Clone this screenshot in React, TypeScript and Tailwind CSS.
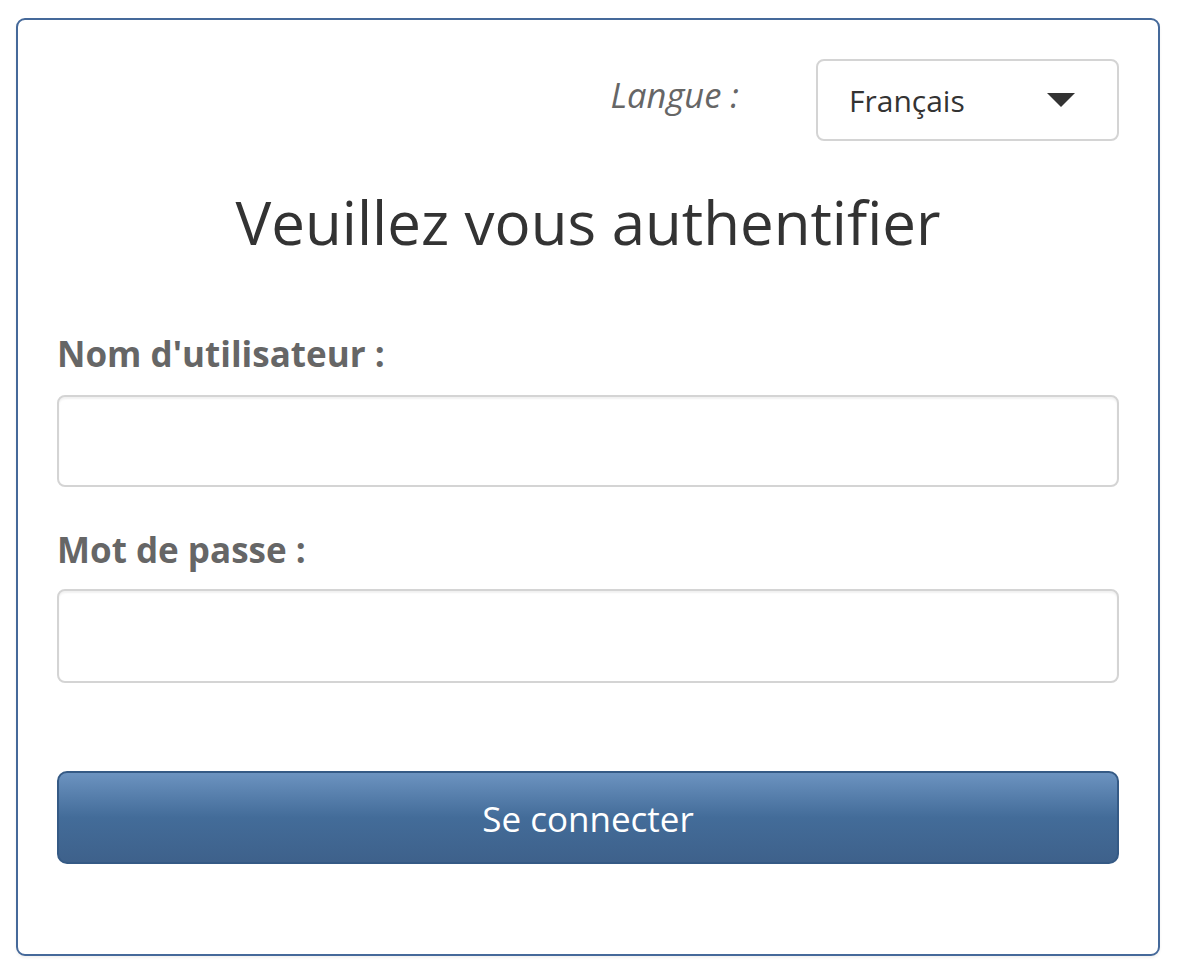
export default function App() {
  return (
    <div className="min-h-screen bg-white pt-[18px] pl-[16px]" style={{ fontFamily: '"Open Sans", sans-serif' }}>
      <div className="w-[1144px] h-[938px] rounded-[9px] border-2 border-[#45699a] bg-white px-[39px] pt-[39px] shadow-[0_2px_3px_rgba(0,0,0,0.06)]">
        {/* language */}
        <div className="flex items-start justify-end">
          <span className="mt-[16px] mr-[77px] text-[34.5px] leading-[40px] italic text-[#666]">Langue :</span>
          <div className="flex h-[82px] w-[303px] items-center justify-between rounded-[8px] border-2 border-[#d4d4d4] pl-[31px] pr-[42px]">
            <span className="text-[30px] text-[#333]">Français</span>
            <svg width="28" height="14" viewBox="0 0 28 14">
              <path d="M0 0 L28 0 L14 14 Z" fill="#333" />
            </svg>
          </div>
        </div>

        <h1 className="mt-[41px] text-center text-[60px] leading-[80px] text-[#333]">Veuillez vous authentifier</h1>

        {/* fields */}
        <label className="mt-[72px] block text-[35px] font-bold leading-[40px] text-[#666]">Nom d'utilisateur :</label>
        <input className="mt-[21px] block h-[92px] w-full rounded-[8px] border-2 border-[#d4d4d4] shadow-[inset_0_2px_2px_rgba(0,0,0,0.06)] outline-none" />

        <label className="mt-[43px] block text-[35px] font-bold leading-[40px] text-[#666]">Mot de passe :</label>
        <input type="password" className="mt-[19px] block h-[94px] w-full rounded-[8px] border-2 border-[#d4d4d4] shadow-[inset_0_2px_2px_rgba(0,0,0,0.06)] outline-none" />

        <button className="mt-[88px] flex h-[93px] w-full items-center justify-center rounded-[10px] border-2 border-[#355a85] bg-gradient-to-b from-[#6c93c0] via-[#436c99] to-[#3e618b] pt-[4px] text-[35px] text-white">
          Se connecter
        </button>
      </div>
    </div>
  );
}
